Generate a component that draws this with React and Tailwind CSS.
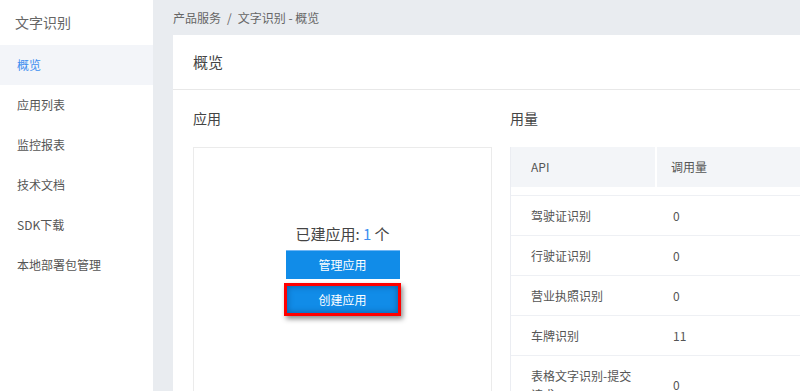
const navItems = ['概览', '应用列表', '监控报表', '技术文档', 'SDK下载', '本地部署包管理'];

const usage = [
  { api: '驾驶证识别', count: '0' },
  { api: '行驶证识别', count: '0' },
  { api: '营业执照识别', count: '0' },
  { api: '车牌识别', count: '11' },
  { api: '表格文字识别-提交请求', count: '0' },
];

export default function App() {
  return (
    <div
      className="flex h-[391px] w-[800px] overflow-hidden bg-[#e9ecf0] text-[#555]"
      style={{ fontFamily: '"Noto Sans CJK SC", "Liberation Sans", sans-serif' }}
    >
      {/* Sidebar */}
      <aside className="w-[153px] shrink-0 bg-white">
        <div className="flex h-[45px] items-center pl-[15px] text-[14px] text-[#666]">文字识别</div>
        <ul>
          {navItems.map((item, i) => (
            <li
              key={item}
              className={`flex h-[40px] items-center pl-[17px] text-[12px] ${
                i === 0 ? 'bg-[#f3f5f9] text-[#3d8ff0]' : 'text-[#555]'
              }`}
            >
              {item}
            </li>
          ))}
        </ul>
      </aside>

      {/* Main */}
      <main className="flex min-w-0 flex-1 flex-col overflow-hidden pl-5">
        <div className="flex h-[35px] shrink-0 items-center text-[12px] text-[#666]">
          产品服务<span className="mx-[6px]">/</span>文字识别 - 概览
        </div>

        <div className="flex w-[700px] flex-1 flex-col bg-white">
          <div className="flex h-[55px] shrink-0 items-center border-b border-[#e8e8e8] px-5 text-[15px] text-[#444]">
            概览
          </div>

          <div className="flex flex-1 gap-[18px] px-5">
            {/* Apps */}
            <section className="flex w-[299px] shrink-0 flex-col">
              <h3 className="flex h-[57px] shrink-0 items-center text-[14px] text-[#444]">应用</h3>
              <div className="flex flex-1 flex-col items-center border border-b-0 border-[#ebebeb] pt-[74px]">
                <div className="h-[24px] text-[15px] leading-[24px] text-[#444]">
                  已建应用: <span className="text-[#3d8ff0]">1</span> 个
                </div>
                <button className="mt-[4px] h-[29px] w-[114px] border-t border-[#6fb6f5] bg-[#118ce8] text-[12px] text-white">
                  管理应用
                </button>
                <button className="mt-[4px] h-[33px] w-[117px] border-[3px] border-[#ff0000] bg-[#118ce8] text-[12px] text-white shadow-[2px_3px_5px_rgba(0,0,0,0.45),inset_0_0_6px_rgba(0,40,90,0.5)]">
                  创建应用
                </button>
              </div>
            </section>

            {/* Usage */}
            <section className="flex min-w-0 flex-1 flex-col">
              <h3 className="flex h-[57px] shrink-0 items-center text-[14px] text-[#444]">用量</h3>
              <div className="border-l border-[#ebedf2] text-[12px]">
                <div className="flex h-[40px] bg-[#f3f5f8]">
                  <div className="flex w-[146px] items-center border-r-2 border-white pl-5">API</div>
                  <div className="flex flex-1 items-center pl-[14px]">调用量</div>
                </div>
                <div className="h-[9px] border-b border-[#eef0f4]" />
                {usage.map((row) => (
                  <div key={row.api} className="flex border-b border-[#eef0f4]">
                    <div className="flex w-[146px] items-center py-[10px] pl-5 pr-5 leading-[19px]">{row.api}</div>
                    <div className="flex flex-1 items-center pl-[16px]">{row.count}</div>
                  </div>
                ))}
              </div>
            </section>
          </div>
        </div>
      </main>
    </div>
  );
}
